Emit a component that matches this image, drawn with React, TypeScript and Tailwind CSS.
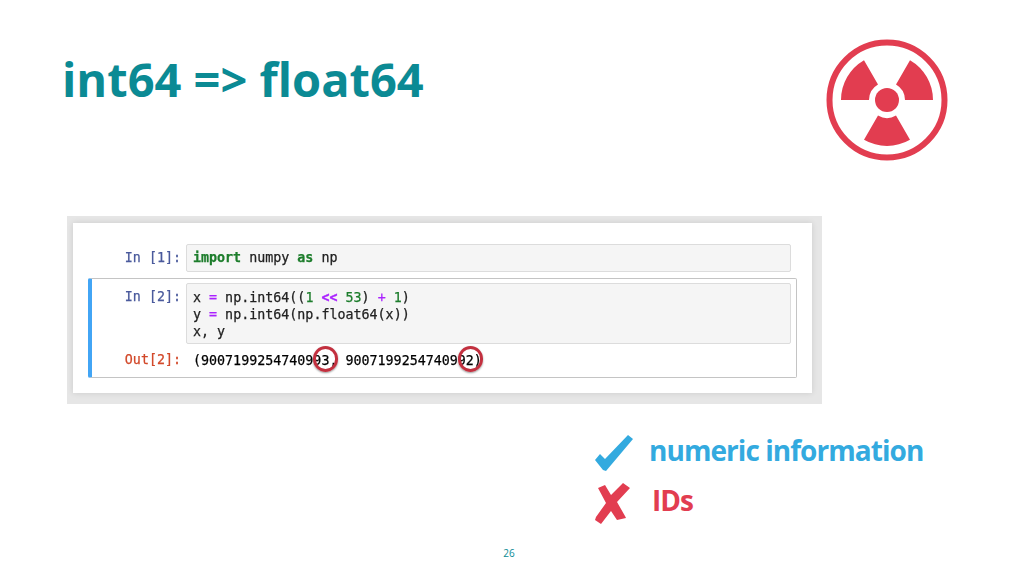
import React from 'react';

const mono = "font-['DejaVu_Sans_Mono','Liberation_Mono',monospace] text-[13.33px] leading-[17px] [-webkit-text-stroke:0.25px_currentColor]";

const RadiationIcon = () => (
  <svg width="122" height="122" viewBox="0 0 122 122" fill="#e23d50">
    <circle cx="61" cy="61" r="57.5" fill="none" stroke="#e23d50" strokeWidth="6" />
    <circle cx="61" cy="61" r="12" />
    <path d="M15 61 A46 46 0 0 1 38 21.16 L52 45.41 A18 18 0 0 0 43 61 Z" />
    <path d="M107 61 A46 46 0 0 0 84 21.16 L70 45.41 A18 18 0 0 1 79 61 Z" />
    <path d="M38 100.84 A46 46 0 0 0 84 100.84 L70 76.59 A18 18 0 0 1 52 76.59 Z" />
  </svg>
);

const CheckIcon = () => (
  <svg width="38" height="36" viewBox="0 0 38 36" fill="#33aadf">
    <path d="M0 25 L5 19 L10 24 L33 0 L38 4 L11 36 L8 35 Z" />
  </svg>
);

const CrossIcon = () => (
  <svg width="36" height="41" viewBox="0 0 36 41" fill="#e23d50">
    <path d="M3 5 L10 2 L16 12 L28 0 L35 5 L22 19 L30 33 L31 35 L22 37 L16 28 L6 41 L0 37 L1 34 L11 20 Z" />
  </svg>
);

const Prompt = ({ children, out }: { children: string; out?: boolean }) => (
  <div className={`${mono} w-[94px] shrink-0 text-right pr-[5px] pt-[5px] ${out ? 'text-[#d2492a]' : 'text-[#4a5a9c]'}`}>{children}</div>
);

const Notebook = () => (
  <div className="ml-[67px] w-[755px] h-[188px] bg-[#e6e6e6] pt-[7px] pl-[6px] pr-[10px] pb-[11px]">
    <div className="relative h-full bg-white pt-[21px] pl-[15px] pr-[15px] text-[#222] shadow-[0_0_6px_rgba(0,0,0,0.12)]">
      <div className="flex mr-[-9px] ml-[4px] blur-[0.3px]">
        <Prompt>In [1]:</Prompt>
        <div className={`${mono} flex-1 mr-[15px] h-[28px] bg-[#f5f5f5] border border-[#dcdcdc] rounded-[2px] pl-[6px] pt-[4px]`}>
          <span className="font-bold text-[#1d7d2c]">import</span> numpy <span className="font-bold text-[#1d7d2c]">as</span> np
        </div>
      </div>
      <div className="mt-[6px] h-[100px] border border-l-[4px] border-[#c4c4c4] border-l-[#42a5f5] pt-[4px] pr-[5px] rounded-[2px]">
        <div className="flex blur-[0.3px]">
          <Prompt>In [2]:</Prompt>
          <div className={`${mono} flex-1 h-[61px] bg-[#f5f5f5] border border-[#dcdcdc] rounded-[2px] pl-[6px] pt-[5px]`}>
            <div>x <span className="text-[#aa22ff]">=</span> np.int64((<span className="text-[#1d7d2c]">1</span> <span className="font-bold text-[#aa22ff]">&lt;&lt;</span> <span className="text-[#1d7d2c]">53</span>) <span className="text-[#aa22ff]">+</span> <span className="text-[#1d7d2c]">1</span>)</div>
            <div>y <span className="text-[#aa22ff]">=</span> np.int64(np.float64(x))</div>
            <div>x, y</div>
          </div>
        </div>
        <div className="flex mt-[2px] blur-[0.3px]">
          <Prompt out>Out[2]:</Prompt>
          <div className={`${mono} pl-[7px] pt-[6px] text-black`}>(9007199254740993, 9007199254740992)</div>
        </div>
      </div>
      {/* red markers over the two last digits */}
      <div className="absolute left-[240px] top-[123px] w-[25px] h-[26px] rounded-full border-[3px] border-[#c2303f] shadow-[0_1px_2px_rgba(0,0,0,0.4)]" />
      <div className="absolute left-[385px] top-[123px] w-[25px] h-[26px] rounded-full border-[3px] border-[#c2303f] shadow-[0_1px_2px_rgba(0,0,0,0.4)]" />
    </div>
  </div>
);

export default function App() {
  return (
    <div className="w-[1024px] h-[576px] overflow-hidden bg-white flex flex-col font-['Open_Sans','Noto_Sans',sans-serif]">
      <header className="h-[216px] flex justify-between items-start pl-[62px] pr-[76px] pt-[39px]">
        <h1 className="mt-[8px] text-[47px] leading-[64px] font-bold text-[#0b8a94]">int64 =&gt; float64</h1>
        <RadiationIcon />
      </header>
      <Notebook />
      <div className="ml-[595px] mt-[30px] flex flex-col">
        <div className="flex items-center h-[37px]">
          <CheckIcon />
          <span className="ml-[16px] pb-[4px] text-[28px] leading-[37px] font-bold tracking-[-0.95px] text-[#33aadf]">numeric information</span>
        </div>
        <div className="flex items-center h-[41px] mt-[12px]">
          <CrossIcon />
          <span className="ml-[21px] pb-[6px] text-[28px] leading-[37px] font-bold tracking-[-0.95px] text-[#e23d50]">IDs</span>
        </div>
      </div>
      <div className="mt-[22px] text-center text-[10px] leading-[14px] pr-[6px] text-[#0b8a94]">26</div>
    </div>
  );
}
